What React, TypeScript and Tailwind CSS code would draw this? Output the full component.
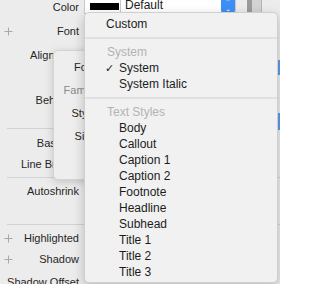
import type { ReactNode } from "react";

const SANS = "font-['Liberation_Sans',Arial,sans-serif]";

function Plus() {
  return (
    <svg width="9" height="9" viewBox="0 0 9 9" className="shrink-0">
      <path d="M4.5 0.5v8M0.5 4.5h8" stroke="#a8a8a8" strokeWidth="1" />
    </svg>
  );
}

function Row({
  h,
  label,
  plus,
  children,
}: {
  h: number;
  label?: string;
  plus?: boolean;
  children?: ReactNode;
}) {
  return (
    <div className="flex items-center shrink-0" style={{ height: h }}>
      <div className="w-[80px] flex items-center pl-[4px] pr-[1px]">
        {plus && <Plus />}
        <span className="ml-auto whitespace-nowrap text-[11px] leading-[14px] text-[#262626]">
          {label}
        </span>
      </div>
      {children}
    </div>
  );
}

function Sep() {
  return <div className="h-px ml-[7px] bg-[#d2d2d2] shrink-0" />;
}

function MenuSep() {
  return (
    <div className="h-[12px] flex items-center">
      <div className="h-[2px] w-full bg-[#e0e0e0]" />
    </div>
  );
}

function Header({ children }: { children: ReactNode }) {
  return (
    <div className="h-[16px] flex items-center pl-[22px] text-[12px] text-[#b3b3b3]">
      {children}
    </div>
  );
}

function Item({ children, checked }: { children: ReactNode; checked?: boolean }) {
  return (
    <div className="h-[16px] flex items-center text-[12px] text-[#1c1c1c]">
      <span className="w-[34px] pl-[20px] text-[11px] leading-none">{checked ? "✓" : ""}</span>
      <span>{children}</span>
    </div>
  );
}

const STYLES = [
  "Body",
  "Callout",
  "Caption 1",
  "Caption 2",
  "Footnote",
  "Headline",
  "Subhead",
  "Title 1",
  "Title 2",
  "Title 3",
];

export default function App() {
  return (
    <div className={`relative w-[280px] h-[284px] overflow-hidden bg-[#ececec] ${SANS}`}>
      {/* inspector rows behind the menus */}
      <div className="flex flex-col -mt-[5px]">
        <Row h={24} label="Color">
          <div className="ml-[4px] h-[18px] -mt-[4px] w-[37px] bg-white border border-[#c8c8c8] flex items-end pb-[3px] pl-[5px]">
            <div className="w-[29px] h-[7px] bg-black" />
          </div>
          <div className="h-[18px] -mt-[4px] w-[115px] bg-white border border-[#c8c8c8] border-l-0 flex items-end">
            <span className="pl-[4px] pb-[1px] text-[12px] leading-[14px] text-[#1c1c1c]">Default</span>
            <div className="ml-auto w-[14px] h-[16px] rounded-[3px] bg-[#3d8ff6] flex flex-col items-center justify-center text-white text-[7px] leading-[6px]">
              <span>⌃</span>
              <span className="rotate-180">⌃</span>
            </div>
          </div>
          <div className="ml-[11px] -mt-[4px] h-[18px] w-[5px] bg-[#9b9b9b]" />
          <div className="-mt-[4px] h-[18px] w-[10px] bg-[#d3d3d3] border-r border-[#b5b5b5]" />
        </Row>
        <Row h={24} label="Font" plus />
        <Row h={24} label="Alignment" />
        <div className="h-[21px] shrink-0" />
        <Row h={24} label="Behavior" />
        <div className="h-[16px] shrink-0" />
        <Sep />
        <Row h={28} label="Baseline" />
        <Row h={14} label="Line Breaks" />
        <div className="h-[6px] shrink-0" />
        <Sep />
        <Row h={26} label="Autoshrink" />
        <Row h={16} />
        <div className="h-[4px] shrink-0" />
        <Sep />
        <Row h={26} label="Highlighted" plus />
        <Row h={16} label="Shadow" plus />
        <Row h={30} label="Shadow Offset" />
      </div>

      {/* font popover */}
      <div className="absolute left-[53px] top-[50px] w-[110px] h-[130px] rounded-[5px] bg-[#eeeeee] border border-[#d4d4d4] shadow-[0_2px_8px_rgba(0,0,0,0.18)] pt-[5px]">
        {[
          ["Font", "text-[#262626]"],
          ["Family", "text-[#8a8a8a]"],
          ["Style", "text-[#262626]"],
          ["Size", "text-[#262626]"],
        ].map(([t, c]) => (
          <div key={t} className="h-[23px] w-[42px] flex items-center justify-end">
            <span className={`text-[11px] ${c}`}>{t}</span>
          </div>
        ))}
      </div>

      {/* blue bits at right edge */}
      <div className="absolute right-0 top-[60px] w-[2px] h-[15px] bg-[#5a9cf0]" />
      <div className="absolute right-0 top-[113px] w-[2px] h-[17px] bg-[#5a9cf0]" />

      {/* font menu */}
      <div className="absolute left-[84px] top-[12px] w-[194px] h-[271px] rounded-[5px] bg-[#f1f1f1] border border-[#cfcfcf] shadow-[0_4px_12px_rgba(0,0,0,0.22)] pt-[3px]">
        <div className="h-[16px] flex items-center pl-[21px] text-[12px] text-[#1c1c1c]">Custom</div>
        <MenuSep />
        <Header>System</Header>
        <Item checked>System</Item>
        <Item>System Italic</Item>
        <MenuSep />
        <Header>Text Styles</Header>
        {STYLES.map((s) => (
          <Item key={s}>{s}</Item>
        ))}
      </div>
    </div>
  );
}
